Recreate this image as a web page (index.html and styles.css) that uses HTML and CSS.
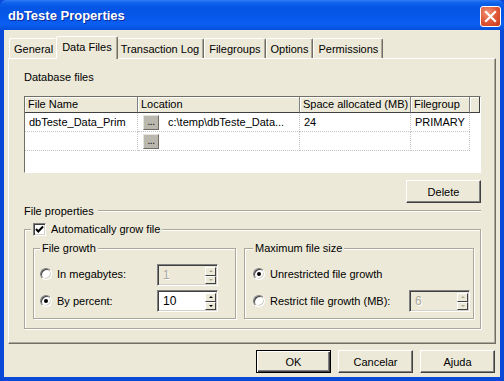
FILE: index.html
```html
<!DOCTYPE html>
<html>
<head>
<meta charset="utf-8">
<link rel="stylesheet" href="styles.css">
</head>
<body>
<div class="window">
  <div class="titlebar">
    <span class="title">dbTeste Properties</span>
    <span class="close"><svg width="13" height="13" viewBox="0 0 13 13"><path d="M2 2 L11 11 M11 2 L2 11" stroke="#fff" stroke-width="2.2" stroke-linecap="square"/></svg></span>
  </div>
  <div class="body">
    <div class="tabs">
      <div class="tab">General</div>
      <div class="tab active">Data Files</div>
      <div class="tab">Transaction Log</div>
      <div class="tab">Filegroups</div>
      <div class="tab">Options</div>
      <div class="tab">Permissions</div>
    </div>
    <div class="panel">
      <div class="section-label">Database files</div>
      <div class="grid">
        <div class="th">File Name</div>
        <div class="th">Location</div>
        <div class="th">Space allocated (MB)</div>
        <div class="th">Filegroup</div>
        <div class="th filler"></div>

        <div class="td">dbTeste_Data_Prim</div>
        <div class="td loc"><span class="dots">...</span><span>c:\temp\dbTeste_Data...</span></div>
        <div class="td">24</div>
        <div class="td">PRIMARY</div>
        <div class="td filler"></div>

        <div class="td"></div>
        <div class="td loc"><span class="dots">...</span></div>
        <div class="td"></div>
        <div class="td"></div>
        <div class="td filler"></div>
      </div>
      <div class="delete-row"><button class="btn">Delete</button></div>
      <div class="etched-title"><span>File properties</span><span class="rule"></span></div>
      <div class="group outer">
        <div class="legend"><span class="check"><svg width="11" height="11" viewBox="0 0 11 11"><path d="M2 5 L4.3 7.5 L9 2.5" fill="none" stroke="#000" stroke-width="2"/></svg></span><span>Automatically grow file</span></div>
        <div class="groups">
          <div class="group growth">
            <div class="legend">File growth</div>
            <div class="rows">
              <div class="row">
                <span class="opt"><span class="radio"></span>In megabytes:</span>
                <span class="spin disabled"><span class="val">1</span><span class="arrows"><span class="arr up"></span><span class="arr dn"></span></span></span>
              </div>
              <div class="row">
                <span class="opt"><span class="radio on"></span>By percent:</span>
                <span class="spin"><span class="val">10</span><span class="arrows"><span class="arr up"></span><span class="arr dn"></span></span></span>
              </div>
            </div>
          </div>
          <div class="group maxsize">
            <div class="legend">Maximum file size</div>
            <div class="rows">
              <div class="row">
                <span class="opt"><span class="radio on"></span>Unrestricted file growth</span>
              </div>
              <div class="row">
                <span class="opt"><span class="radio"></span>Restrict file growth (MB):</span>
                <span class="spin disabled"><span class="val">6</span><span class="arrows"><span class="arr up"></span><span class="arr dn"></span></span></span>
              </div>
            </div>
          </div>
        </div>
      </div>
    </div>
    <div class="buttons">
      <button class="btn default">OK</button>
      <button class="btn">Cancelar</button>
      <button class="btn">Ajuda</button>
    </div>
  </div>
</div>
</body>
</html>
```

FILE: styles.css
```css
* { box-sizing: border-box; }
html, body { margin: 0; padding: 0; }
body {
  font-family: "Liberation Sans", Arial, sans-serif;
  font-size: 11px;
  color: #000;
  background: #0842d0;
}
.window {
  width: 504px;
  height: 381px;
  background: #0a48d8;
  padding: 0 4px 4px 4px;
  display: flex;
  flex-direction: column;
}
.titlebar {
  height: 30px;
  margin: 0 -4px;
  padding: 0 3px 0 8px;
  display: flex;
  align-items: center;
  justify-content: space-between;
  background: linear-gradient(#2f7cf6 0%, #0d61ea 10%, #0455e4 25%, #0558ea 60%, #0a5ff2 80%, #0650dc 100%);
  border-radius: 6px 6px 0 0;
}
.title {
  color: #fff;
  font-weight: bold;
  font-size: 13px;
  text-shadow: 1px 1px 0 #0b2a9a;
  margin-top: 1px;
}
.close {
  width: 21px;
  height: 21px;
  border: 1px solid #fff;
  border-radius: 3px;
  background: radial-gradient(circle at 35% 30%, #f09476 0%, #e0583a 50%, #c83a18 100%);
  display: flex;
  align-items: center;
  justify-content: center;
  margin-top: 3px;
}
.body {
  flex: 1;
  background: #ECE9D8;
  padding: 6px 4px 4px 4px;
  display: flex;
  flex-direction: column;
}
.tabs {
  height: 22px;
  display: flex;
  align-items: flex-end;
  padding-left: 1px;
}
.tab {
  height: 20px;
  padding: 0 4px;
  display: flex;
  align-items: center;
  border-top: 1px solid #fff;
  border-left: 1px solid #fff;
  border-right: 1px solid #716f64;
  border-radius: 2px 2px 0 0;
  box-shadow: inset -1px 0 0 #aca899;
  white-space: nowrap;
}
.tab.active {
  height: 23px;
  margin: 0 -2px -1px -2px;
  padding: 0 5px 2px 5px;
  background: #ECE9D8;
  position: relative;
  z-index: 1;
}
.panel {
  flex: 1;
  border: 1px solid;
  border-color: #fff #716f64 #716f64 #fff;
  box-shadow: inset -1px -1px 0 #aca899;
  padding: 12px 14px 0 15px;
  display: flex;
  flex-direction: column;
}
.section-label {
  height: 13px;
  line-height: 13px;
}
.grid {
  margin-top: 12px;
  height: 77px;
  background: #fff;
  border: 1px solid;
  border-color: #716f64 #fff #fff #716f64;
  display: grid;
  grid-template-columns: 113px 162px 111px 59px 1fr;
  grid-template-rows: 16px 19px 19px 1fr;
}
.th {
  background: #ECE9D8;
  border-right: 1px solid #808080;
  border-bottom: 1px solid #404040;
  box-shadow: inset 1px 1px 0 #fff;
  padding-left: 3px;
  line-height: 15px;
  white-space: nowrap;
  overflow: hidden;
}
.th.filler { border-right: 1px solid #404040; }
.td {
  border-right: 1px dotted #c4c4c4;
  border-bottom: 1px dotted #c4c4c4;
  padding-left: 4px;
  display: flex;
  align-items: center;
  white-space: nowrap;
  overflow: hidden;
}
.td.filler { border: none; }
.td.loc { padding-left: 5px; gap: 9px; }
.dots {
  width: 16px;
  height: 15px;
  flex: none;
  background: #b9b7ae;
  border: 1px solid;
  border-color: #e6e4dc #6e6c64 #6e6c64 #e6e4dc;
  font-size: 10px;
  line-height: 12px;
  text-align: center;
  letter-spacing: -0.5px;
}
.delete-row {
  margin-top: 7px;
  display: flex;
  justify-content: flex-end;
}
.btn {
  width: 75px;
  height: 23px;
  font-family: "Liberation Sans", Arial, sans-serif;
  font-size: 11px;
  color: #000;
  background: #ECE9D8;
  border: 1px solid;
  border-color: #fff #404040 #404040 #fff;
  box-shadow: inset -1px -1px 0 #808080;
  padding: 0;
}
.btn.default {
  border: 1px solid #000;
  box-shadow: inset 1px 1px 0 #fff, inset -1px -1px 0 #404040, inset -2px -2px 0 #808080;
}
.etched-title {
  margin-top: 1px;
  height: 13px;
  display: flex;
  align-items: center;
  gap: 4px;
}
.rule {
  flex: 1;
  height: 2px;
  border-top: 1px solid #aca899;
  border-bottom: 1px solid #fff;
}
.group {
  border: 1px solid #aca899;
  box-shadow: inset 1px 1px 0 #fff, 1px 1px 0 #fff;
}
.legend {
  height: 14px;
  margin-top: -8px;
  background: #ECE9D8;
  width: fit-content;
  padding: 0 2px;
  display: flex;
  align-items: center;
  white-space: nowrap;
}
.outer {
  margin-top: 12px;
  padding: 0 6px 9px 8px;
}
.outer > .legend {
  margin-left: -2px;
  gap: 5px;
}
.check {
  width: 13px;
  height: 13px;
  background: #fff;
  border: 1px solid;
  border-color: #808080 #fff #fff #808080;
  box-shadow: inset 1px 1px 0 #404040, inset -1px -1px 0 #d4d0c8;
  display: flex;
  align-items: center;
  justify-content: center;
}
.groups {
  margin-top: 12px;
  display: grid;
  grid-template-columns: 203px 1fr;
  gap: 8px;
}
.growth { padding: 0 17px 6px 6px; }
.maxsize { padding: 0 3px 6px 8px; }
.rows {
  margin-top: 9px;
  display: flex;
  flex-direction: column;
  gap: 4px;
}
.row {
  height: 22px;
  display: flex;
  align-items: center;
  justify-content: space-between;
}
.opt {
  display: flex;
  align-items: center;
  gap: 5px;
  margin-top: -3px;
  white-space: nowrap;
}
.row + .row .opt { margin-top: 0; }
.radio {
  width: 12px;
  height: 12px;
  border-radius: 50%;
  background: #fff;
  border: 1px solid;
  border-color: #808080 #fff #fff #808080;
  box-shadow: inset 1px 1px 0 #404040, inset -1px -1px 0 #d4d0c8;
  display: flex;
  align-items: center;
  justify-content: center;
}
.radio.on::after {
  content: "";
  width: 4px;
  height: 4px;
  border-radius: 50%;
  background: #000;
}
.spin {
  width: 61px;
  height: 22px;
  display: flex;
  background: #fff;
  border: 1px solid;
  border-color: #808080 #fff #fff #808080;
  box-shadow: inset 1px 1px 0 #404040, inset -1px -1px 0 #d4d0c8;
  padding: 2px 1px 1px 2px;
}
.spin .val {
  flex: 1;
  font-size: 12px;
  padding-left: 3px;
  line-height: 17px;
}
.spin.disabled { background: #ECE9D8; }
.spin.disabled .val { color: #aca899; text-shadow: 1px 1px 0 #fff; }
.arrows {
  width: 11px;
  display: flex;
  flex-direction: column;
}
.arr {
  flex: 1;
  background: #ECE9D8;
  border: 1px solid;
  border-color: #fff #404040 #404040 #fff;
  display: flex;
  align-items: center;
  justify-content: center;
}
.arr::after {
  content: "";
  width: 0;
  height: 0;
  border-left: 2px solid transparent;
  border-right: 2px solid transparent;
}
.arr.up::after { border-bottom: 2px solid #000; }
.arr.dn::after { border-top: 2px solid #000; }
.spin.disabled .arr.up::after { border-bottom-color: #aca899; }
.spin.disabled .arr.dn::after { border-top-color: #aca899; }
.buttons {
  margin-top: 6px;
  display: flex;
  justify-content: flex-end;
  gap: 7px;
  padding-right: 1px;
}
```
